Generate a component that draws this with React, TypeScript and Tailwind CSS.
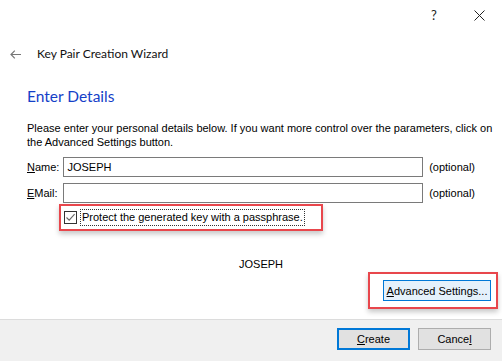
const ui = "font-['Liberation_Sans',Arial,sans-serif]";
const segoe = "font-['Lato','Noto_Sans',sans-serif]";

function RedBox({ className, children }: { className: string; children: React.ReactNode }) {
  return (
    <div className={`border-2 border-[#e8464c] shadow-[0_3px_5px_rgba(0,0,0,0.22)] ${className}`}>{children}</div>
  );
}

export default function App() {
  return (
    <div className={`flex h-[361px] w-[502px] flex-col overflow-hidden bg-white text-[11px] leading-[14px] text-black ${ui}`}>
      {/* window caption */}
      <div className="flex h-[30px] items-center justify-end">
        <span className={`flex w-[44px] justify-center text-[13px] text-[#222] ${segoe}`}>?</span>
        <span className="flex w-[46px] justify-center">
          <svg width="11" height="11" viewBox="0 0 11 11" stroke="#222" strokeWidth="1">
            <path d="M0.5 0.5 L10.5 10.5 M10.5 0.5 L0.5 10.5" />
          </svg>
        </span>
      </div>

      <div className="flex h-[48px] items-center">
        <svg className="ml-[10px] mt-[1px]" width="11" height="9" viewBox="0 0 11 9" fill="none" stroke="#777" strokeWidth="1.2">
          <path d="M11 4.5 H1 M4.8 0.7 L1 4.5 L4.8 8.3" />
        </svg>
        <span className={`ml-[16px] text-[12px] text-[#111] ${segoe}`}>Key Pair Creation Wizard</span>
      </div>

      <div className="px-[27px]">
        <h1 className={`mt-[8px] text-[15.5px] leading-[20px] text-[#1440c8] ${segoe}`}>Enter Details</h1>
        <p className="mt-[15px] w-[470px]">
          Please enter your personal details below. If you want more control over the parameters, click on the Advanced Settings button.
        </p>

        <div className="mt-[8px] flex h-[20px] items-center">
          <span className="w-[38px]"><u>N</u>ame:</span>
          <div className="flex h-[20px] w-[375px] items-center border border-[#7a7a7a] px-[3px]">JOSEPH</div>
          <span className="ml-[6px]">(optional)</span>
        </div>
        <div className="mt-[6px] flex h-[20px] items-center">
          <span className="w-[38px]"><u>E</u>Mail:</span>
          <div className="h-[20px] w-[375px] border border-[#7a7a7a]" />
          <span className="ml-[6px]">(optional)</span>
        </div>

        <RedBox className="ml-[32px] mt-[1px] flex h-[27px] w-[264px] items-center pl-[3px]">
          <span className="flex h-[13px] w-[13px] items-center justify-center border border-[#333]">
            <svg width="11" height="11" viewBox="0 0 11 11" fill="none" stroke="#666" strokeWidth="1.1">
              <path d="M1.5 5.5 L4.2 8.2 L9.6 2.2" />
            </svg>
          </span>
          <span className="ml-[3px] border border-dotted border-[#333] px-[1px] leading-[15px]">
            Protect the generated key with a passphrase.
          </span>
        </RedBox>

        <div className="ml-[212px] mt-[26px]">JOSEPH</div>
      </div>

      <div className="mt-[1px] flex justify-end pr-[4px]">
        <RedBox className="h-[37px] w-[130px] pl-[13px] pt-[6px]">
          <div className="flex h-[21px] w-[108px] items-center justify-center border border-[#0078d7] bg-[#e5f1fb]">
            <span><u>A</u>dvanced Settings...</span>
          </div>
        </RedBox>
      </div>

      <div className="mt-auto flex h-[42px] justify-end gap-[8px] border-t border-[#dcdcdc] bg-[#f0f0f0] pr-[11px] pt-[8px]">
        <div className="flex h-[22px] w-[73px] items-center justify-center border-2 border-[#0078d7] bg-[#e1e1e1]">
          <span><u>C</u>reate</span>
        </div>
        <div className="flex h-[22px] w-[73px] items-center justify-center border border-[#adadad] bg-[#e1e1e1]">
          <span>Cance<u>l</u></span>
        </div>
      </div>
    </div>
  );
}
